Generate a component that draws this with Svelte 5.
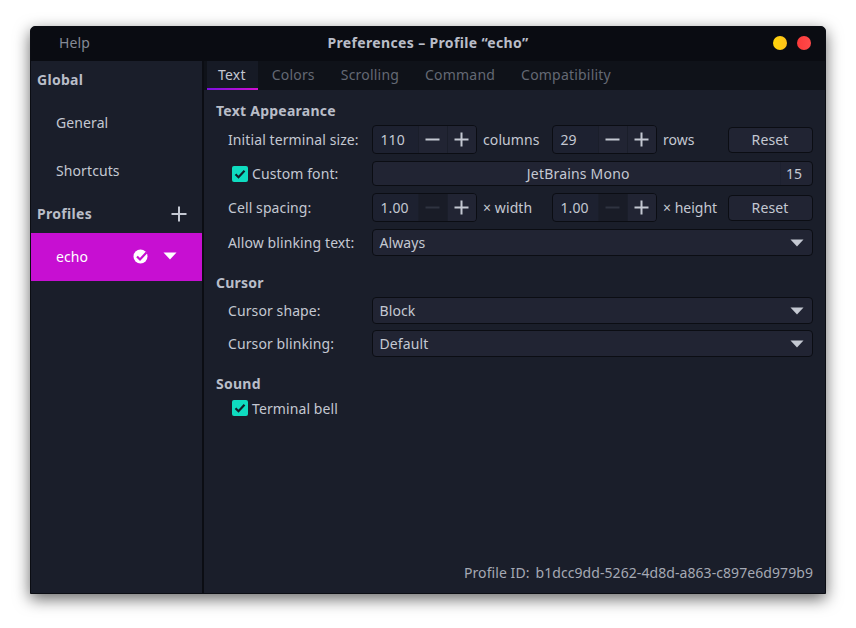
<script lang="ts">
  const tabs = ['Text', 'Colors', 'Scrolling', 'Command', 'Compatibility'];
  const activeTab = 'Text';
</script>

{#snippet spin(value: string, minusOff: boolean)}
  <div class="spin">
    <span class="spin-value">{value}</span>
    <span class="spin-btn" class:off={minusOff}>
      <svg width="15" height="15" viewBox="0 0 15 15"><rect x="0.5" y="6.5" width="14" height="2" fill="currentColor" /></svg>
    </span>
    <span class="spin-btn">
      <svg width="15" height="15" viewBox="0 0 15 15"><path d="M0.5 6.5h6V0.5h2v6h6v2h-6v6h-2v-6h-6z" fill="currentColor" /></svg>
    </span>
  </div>
{/snippet}

{#snippet check()}
  <span class="check">
    <svg width="16" height="16" viewBox="0 0 16 16"><path d="M3.5 8.2l3 3 6-6.4" fill="none" stroke="#12202a" stroke-width="2.2" /></svg>
  </span>
{/snippet}

{#snippet combo(text: string)}
  <div class="combo">
    <span>{text}</span>
    <svg width="14" height="8" viewBox="0 0 14 8"><path d="M0.5 0.5h13L7 7.5z" fill="#c4c8d2" /></svg>
  </div>
{/snippet}

<div class="stage">
  <div class="window">
    <header class="titlebar">
      <span class="help">Help</span>
      <span class="title">Preferences – Profile “echo”</span>
      <div class="dots">
        <span class="dot yellow"></span>
        <span class="dot red"></span>
      </div>
    </header>

    <div class="body">
      <aside class="sidebar">
        <div class="side-head">Global</div>
        <div class="side-item">General</div>
        <div class="side-item">Shortcuts</div>
        <div class="side-head profiles">
          <span>Profiles</span>
          <svg width="16" height="16" viewBox="0 0 16 16"><path d="M0.5 7h6.5V0.5h2V7h6.5v2H9v6.5H7V9H0.5z" fill="#c4c8d2" /></svg>
        </div>
        <div class="side-item selected">
          <span class="grow">echo</span>
          <svg width="15" height="15" viewBox="0 0 15 15">
            <circle cx="7.5" cy="7.5" r="7" fill="#fff" />
            <path d="M4 7.5l3 3 6.5-7" fill="none" stroke="#c70fd2" stroke-width="2.2" />
          </svg>
          <svg class="arrow" width="14" height="8" viewBox="0 0 14 8"><path d="M0.5 0.5h13L7 7.5z" fill="#fff" /></svg>
        </div>
      </aside>

      <main class="main">
        <nav class="tabs">
          {#each tabs as tab}
            <span class="tab" class:active={tab === activeTab}>{tab}</span>
          {/each}
        </nav>

        <div class="content">
          <h3 class="section first">Text Appearance</h3>
          <div class="rows">
            <div class="row h29">
              <span class="label">Initial terminal size:</span>
              {@render spin('110', false)}
              <span class="unit">columns</span>
              {@render spin('29', false)}
              <span class="unit last">rows</span>
              <span class="button">Reset</span>
            </div>
            <div class="row h25">
              <span class="label checked">{@render check()}Custom font:</span>
              <div class="font">
                <span class="font-name">JetBrains Mono</span>
                <span class="font-size">15</span>
              </div>
            </div>
            <div class="row h29">
              <span class="label">Cell spacing:</span>
              {@render spin('1.00', true)}
              <span class="unit">× width</span>
              {@render spin('1.00', true)}
              <span class="unit last">× height</span>
              <span class="button">Reset</span>
            </div>
            <div class="row h27">
              <span class="label">Allow blinking text:</span>
              {@render combo('Always')}
            </div>
          </div>

          <h3 class="section">Cursor</h3>
          <div class="rows">
            <div class="row h27">
              <span class="label">Cursor shape:</span>
              {@render combo('Block')}
            </div>
            <div class="row h27 tight">
              <span class="label">Cursor blinking:</span>
              {@render combo('Default')}
            </div>
          </div>

          <h3 class="section">Sound</h3>
          <div class="bell">{@render check()}Terminal bell</div>

          <footer class="profile-id">
            <span>Profile ID:</span>
            <span>b1dcc9dd-5262-4d8d-a863-c897e6d979b9</span>
          </footer>
        </div>
      </main>
    </div>
  </div>
</div>

<style>
  :global(body) {
    margin: 0;
    background: #fff;
  }

  .stage {
    box-sizing: border-box;
    height: 628px;
    padding: 26px 30px 0;
    overflow: hidden;
  }

  .window {
    box-sizing: border-box;
    width: 796px;
    height: 568px;
    display: flex;
    flex-direction: column;
    background: #1a1e2a;
    border: 1px solid #0b0d13;
    border-radius: 5px 5px 0 0;
    box-shadow: 0 5px 16px rgba(0, 0, 0, 0.6);
    font-family: "Noto Sans", sans-serif;
    font-size: 14px;
    letter-spacing: 0.1px;
    color: #c4c8d2;
    overflow: hidden;
  }

  .titlebar {
    position: relative;
    flex: none;
    box-sizing: border-box;
    height: 34px;
    padding-bottom: 3px;
    display: flex;
    align-items: center;
    justify-content: center;
    background: #0a0c12;
  }

  .help {
    position: absolute;
    left: 28px;
    color: #858a96;
  }

  .title {
    font-weight: 700;
    letter-spacing: 0.35px;
    color: #b9bdc8;
  }

  .dots {
    position: absolute;
    right: 14px;
    display: flex;
    gap: 10px;
  }

  .dot {
    width: 14px;
    height: 14px;
    border-radius: 50%;
  }

  .yellow {
    background: linear-gradient(90deg, #ffd60a, #ffc21a);
  }

  .red {
    background: linear-gradient(90deg, #fb3a3a, #ff4a4a);
  }

  .body {
    flex: 1;
    min-height: 0;
    display: flex;
  }

  .sidebar {
    flex: none;
    width: 171px;
    border-right: 2px solid #0b0d13;
  }

  .side-head {
    box-sizing: border-box;
    height: 38px;
    display: flex;
    align-items: center;
    padding: 0 15px 2px 6px;
    font-weight: 700;
    letter-spacing: 0.3px;
    color: #b9bdc8;
  }

  .profiles {
    justify-content: space-between;
    padding-bottom: 0;
  }

  .profiles span {
    margin-bottom: 2px;
  }

  .side-item {
    box-sizing: border-box;
    height: 48px;
    display: flex;
    align-items: center;
    padding: 0 0 2px 25px;
  }

  .selected {
    background: #c70fd2;
    color: #fff;
    padding-right: 25px;
  }

  .grow {
    flex: 1;
  }

  .arrow {
    margin-left: 15px;
  }

  .main {
    flex: 1;
    min-width: 0;
    display: flex;
    flex-direction: column;
  }

  .tabs {
    flex: none;
    height: 29px;
    display: flex;
    padding-left: 3px;
    background: #0f1219;
  }

  .tab {
    box-sizing: border-box;
    padding: 0 13px;
    display: flex;
    align-items: center;
    letter-spacing: 0.2px;
    color: #646974;
    border-bottom: 2px solid transparent;
  }

  .active {
    margin-right: 1px;
    padding: 0 12px 0 11px;
    color: #c4c8d2;
    background: #161a25;
    border-image: linear-gradient(90deg, #7a10e0, #d40fd0) 1;
  }

  .content {
    flex: 1;
    min-height: 0;
    display: flex;
    flex-direction: column;
    padding: 0 12px;
  }

  .section {
    margin: 17px 0 4px;
    height: 20px;
    line-height: 20px;
    font-size: 14px;
    font-weight: 700;
    letter-spacing: 0.25px;
    color: #b9bdc8;
  }

  .first {
    margin-top: 11px;
  }

  .rows {
    display: flex;
    flex-direction: column;
    gap: 7px;
  }

  .row {
    display: flex;
    align-items: center;
  }

  .tight {
    margin-top: -1px;
  }

  .h25 {
    height: 25px;
  }

  .h27 {
    height: 27px;
  }

  .h29 {
    height: 29px;
  }

  .label {
    flex: none;
    width: 156px;
    padding-left: 12px;
    box-sizing: border-box;
  }

  .checked {
    display: flex;
    align-items: center;
    padding-left: 16px;
  }

  .check {
    flex: none;
    width: 16px;
    height: 16px;
    margin-right: 4px;
    background: #0fdcc0;
    border-radius: 2px;
    display: block;
  }

  .check svg {
    display: block;
  }

  .spin {
    flex: none;
    box-sizing: border-box;
    width: 105px;
    height: 29px;
    margin-left: -0.5px;
    margin-right: 0.5px;
    display: flex;
    align-items: stretch;
    background: #1d2130;
    border: 1px solid #0b0d13;
    border-radius: 4px;
    overflow: hidden;
  }

  .spin-value {
    width: 45px;
    padding-left: 8px;
    box-sizing: border-box;
    display: flex;
    align-items: center;
  }

  .spin-btn {
    width: 29px;
    display: flex;
    align-items: center;
    justify-content: center;
    background: #212433;
    border-left: 1px solid #1a1e2a;
    box-sizing: border-box;
  }

  .spin-btn.off {
    background: #191c27;
    color: #2f3340;
  }

  .unit {
    flex: none;
    width: 75px;
    padding-left: 6px;
    box-sizing: border-box;
  }

  .last {
    width: 71px;
    letter-spacing: 0;
  }

  .button {
    box-sizing: border-box;
    width: 85px;
    height: 26px;
    display: flex;
    align-items: center;
    justify-content: center;
    padding-right: 1px;
    background: #212433;
    border: 1px solid #0b0d13;
    border-radius: 4px;
  }

  .font {
    flex: 1;
    box-sizing: border-box;
    height: 25px;
    margin-left: -0.5px;
    display: flex;
    align-items: center;
    background: #212433;
    border: 1px solid #0b0d13;
    border-radius: 4px;
  }

  .font-name {
    flex: 1;
    text-align: center;
    padding-left: 4px;
    letter-spacing: 0.2px;
  }

  .font-size {
    width: 32px;
    height: 100%;
    display: flex;
    align-items: center;
    padding-left: 5px;
    border-left: 1px solid #1d2130;
    box-sizing: border-box;
  }

  .combo {
    flex: 1;
    box-sizing: border-box;
    height: 27px;
    margin-left: -0.5px;
    display: flex;
    align-items: center;
    justify-content: space-between;
    padding: 0 8px 0 7px;
    background: #212433;
    border: 1px solid #0b0d13;
    border-radius: 4px;
  }

  .bell {
    display: flex;
    align-items: center;
    height: 20px;
    padding-left: 16px;
  }

  .profile-id {
    margin-top: auto;
    height: 30px;
    display: flex;
    justify-content: flex-end;
    gap: 6px;
    letter-spacing: 0.07px;
    color: #a5a9b4;
  }
</style>
